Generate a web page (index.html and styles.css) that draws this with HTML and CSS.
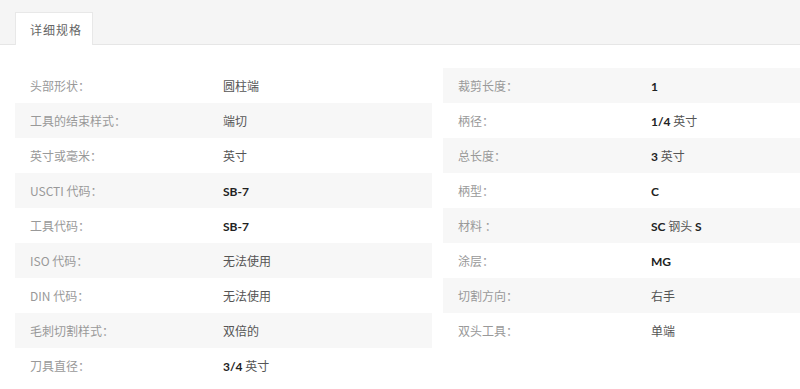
FILE: index.html
```html
<!DOCTYPE html>
<html lang="zh-CN">
<head>
<meta charset="utf-8">
<title>详细规格</title>
<link rel="stylesheet" href="styles.css">
</head>
<body>
<div class="tabbar">
  <div class="tab">详细规格</div>
</div>
<div class="specs">
  <div class="col col-left">
    <div class="row"><span class="label">头部形状：</span><span class="value">圆柱端</span></div>
    <div class="row"><span class="label">工具的结束样式：</span><span class="value">端切</span></div>
    <div class="row"><span class="label">英寸或毫米：</span><span class="value">英寸</span></div>
    <div class="row"><span class="label">USCTI 代码：</span><span class="value"><b>SB-7</b></span></div>
    <div class="row"><span class="label">工具代码：</span><span class="value"><b>SB-7</b></span></div>
    <div class="row"><span class="label">ISO 代码：</span><span class="value">无法使用</span></div>
    <div class="row"><span class="label">DIN 代码：</span><span class="value">无法使用</span></div>
    <div class="row"><span class="label">毛刺切割样式：</span><span class="value">双倍的</span></div>
    <div class="row"><span class="label">刀具直径：</span><span class="value"><b>3/4</b> 英寸</span></div>
  </div>
  <div class="col col-right">
    <div class="row"><span class="label">裁剪长度：</span><span class="value"><b>1</b></span></div>
    <div class="row"><span class="label">柄径：</span><span class="value"><b>1/4</b> 英寸</span></div>
    <div class="row"><span class="label">总长度：</span><span class="value"><b>3</b> 英寸</span></div>
    <div class="row"><span class="label">柄型：</span><span class="value"><b>C</b></span></div>
    <div class="row"><span class="label">材料 ：</span><span class="value"><b>SC</b> 钢头 <b>S</b></span></div>
    <div class="row"><span class="label">涂层：</span><span class="value"><b>MG</b></span></div>
    <div class="row"><span class="label">切割方向：</span><span class="value">右手</span></div>
    <div class="row"><span class="label">双头工具：</span><span class="value">单端</span></div>
  </div>
</div>
</body>
</html>
```
FILE: styles.css
```css
html, body {
  margin: 0;
  padding: 0;
  background: #fff;
}
body {
  font-family: "Noto Sans", "Noto Sans CJK SC", sans-serif;
  font-size: 12px;
}
.tabbar {
  height: 32px;
  padding: 12px 0 0 15px;
  background: #f5f5f5;
  border-bottom: 1px solid #e6e6e6;
  display: flex;
}
.tab {
  width: 76px;
  height: 32px;
  margin-bottom: -1px;
  background: #fff;
  border: 1px solid #e8e8e8;
  border-bottom: none;
  color: #666;
  line-height: 33px;
  text-indent: 14px;
  letter-spacing: 1px;
  font-family: "Noto Sans CJK SC", sans-serif;
}
.specs {
  display: grid;
  grid-template-columns: 417px 1fr;
  column-gap: 11px;
  padding: 23px 0 0 15px;
  align-items: start;
}
.row {
  display: flex;
  height: 35px;
  align-items: center;
  padding-left: 15px;
}
.col-left .row:nth-child(even),
.col-right .row:nth-child(odd) {
  background: #f7f7f7;
}
.label {
  width: 193px;
  flex: none;
  color: #999;
  font-family: "Noto Sans CJK SC", sans-serif;
}
.value {
  color: #555;
  font-family: "Noto Sans CJK SC", sans-serif;
}
.value b {
  font-family: "Lato", "Noto Sans", sans-serif;
  font-weight: 700;
  color: #222;
}
```
